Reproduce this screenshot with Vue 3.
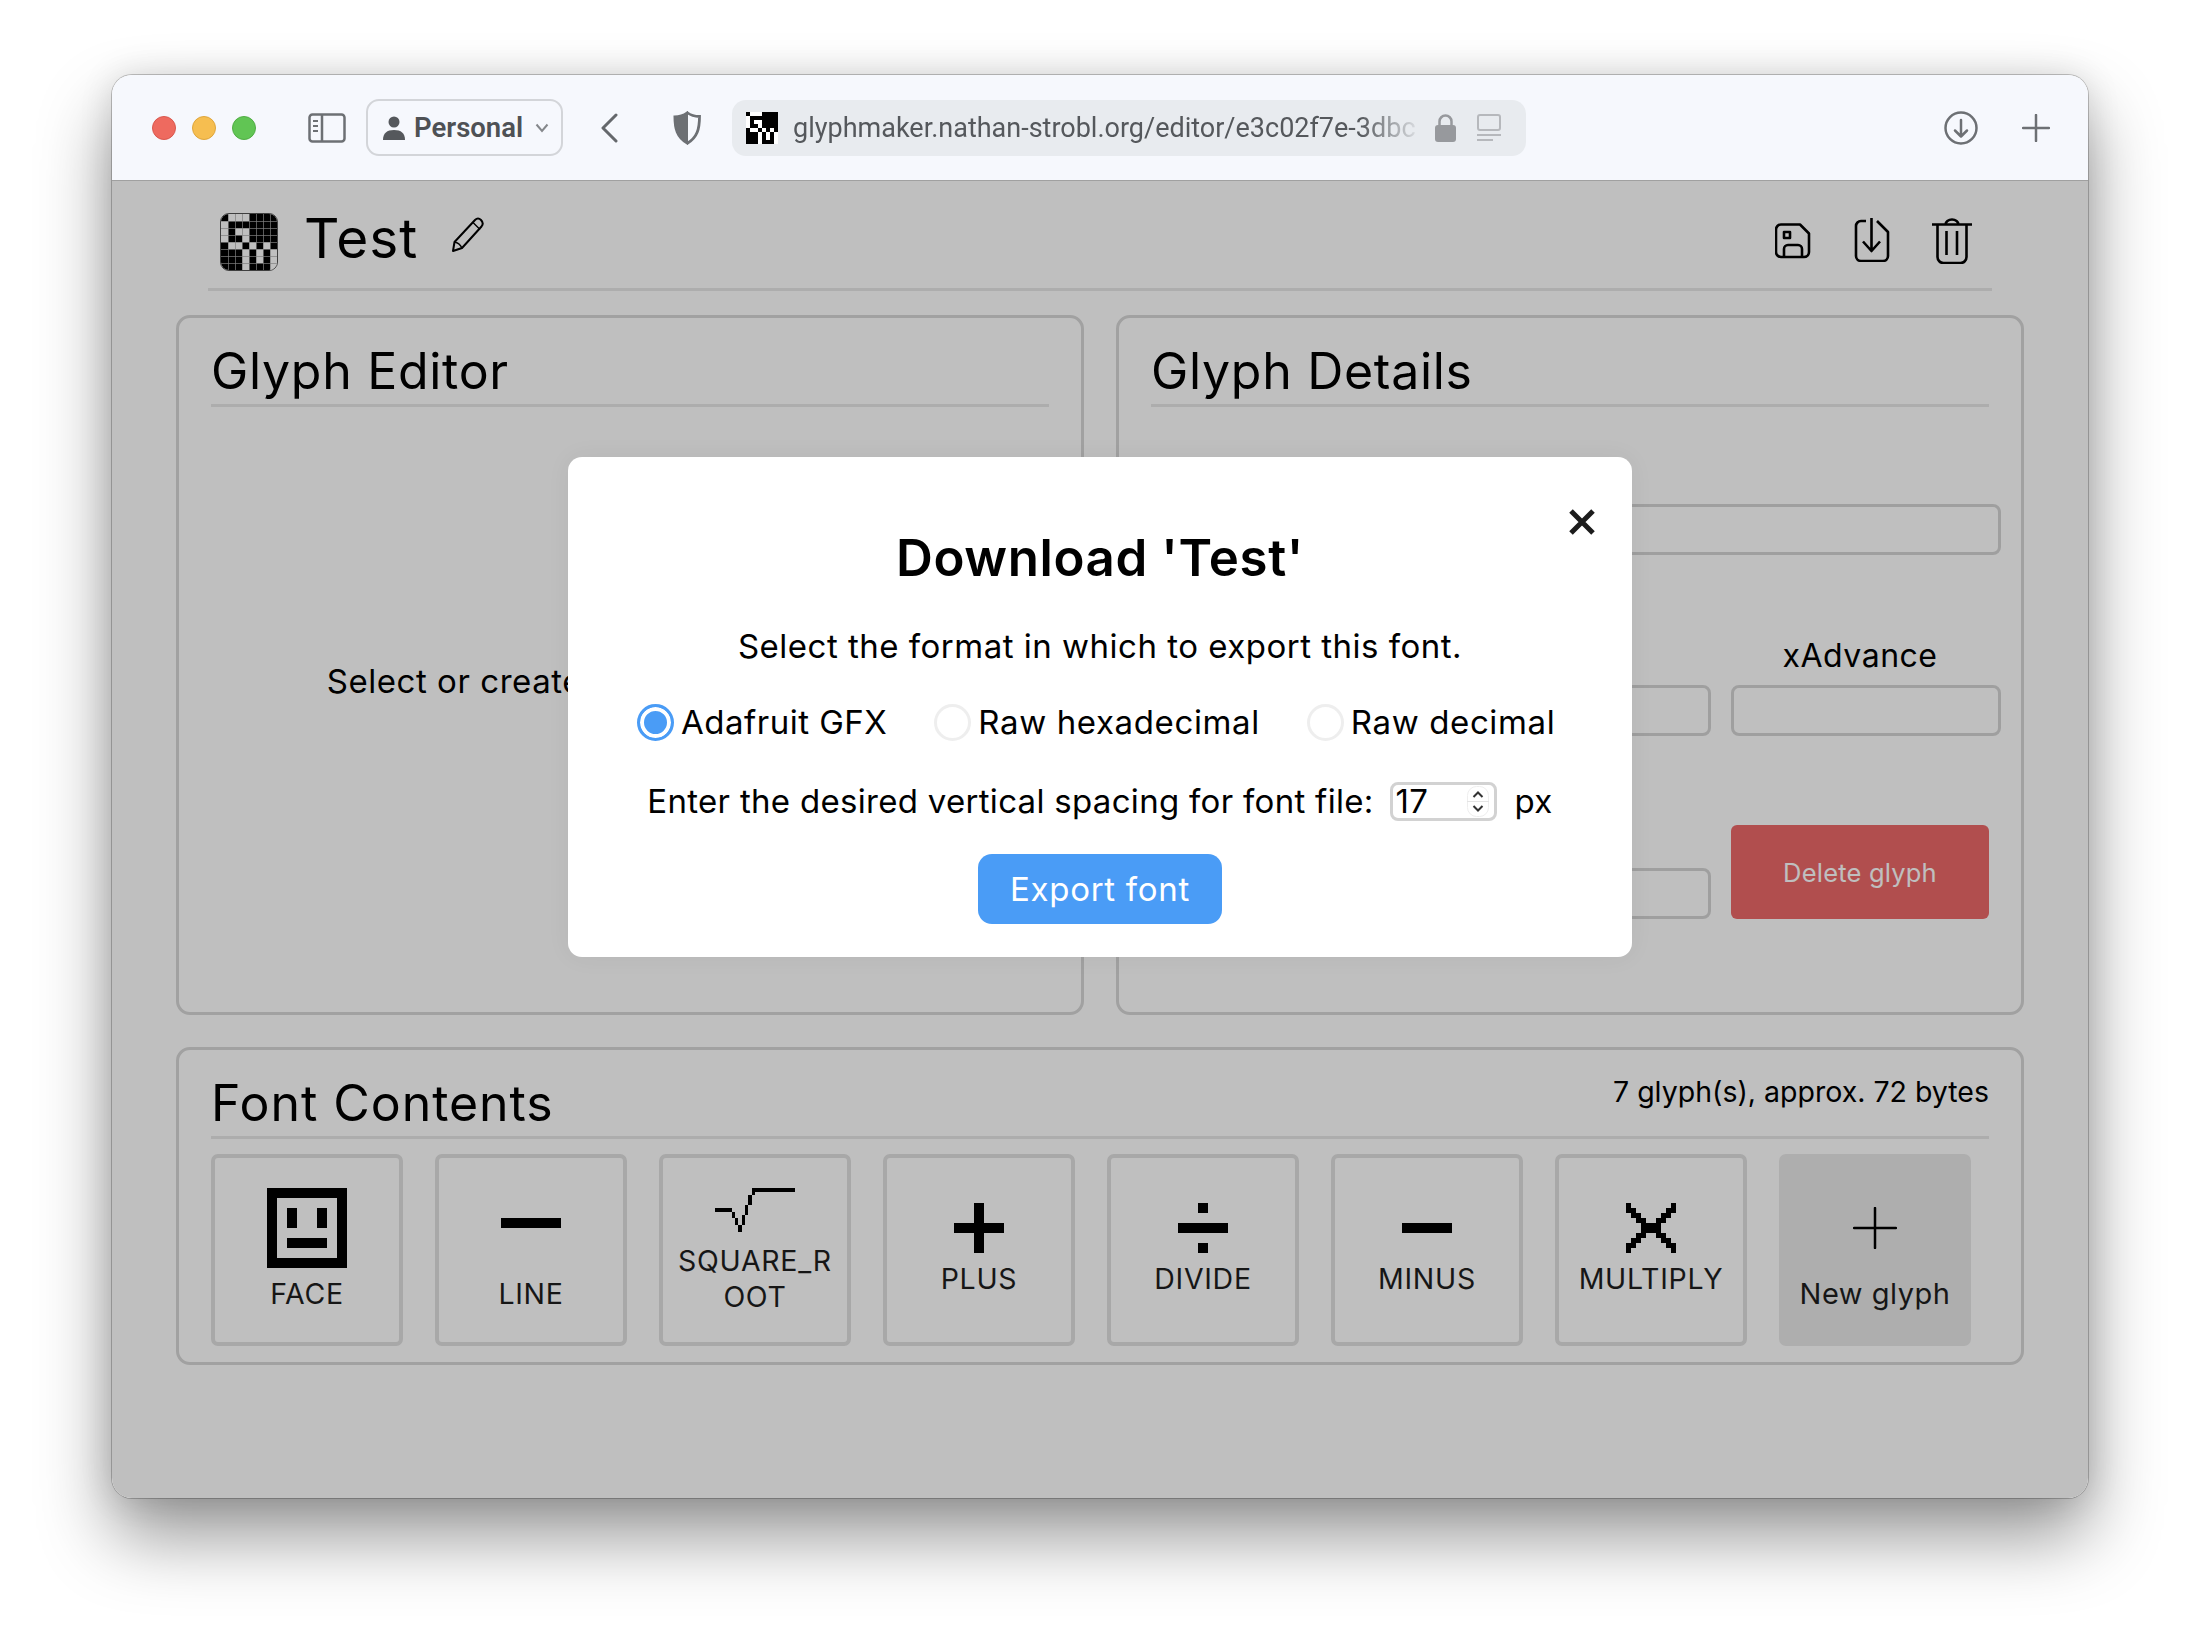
<script setup>
const logoRows = ['#...####', '.#######', '.#..####', '.##.####', '#..#.#.#', '###.#.#.', '###.#.#.', '###.###.']
function cells(rows) {
  const out = []
  rows.forEach((row, y) => {
    for (let x = 0; x < row.length; x++) {
      if (row[x] === '#') out.push({ x, y })
    }
  })
  return out
}
const logoCells = cells(logoRows)
const gridLines = [1, 2, 3, 4, 5, 6, 7]
const glyphs = [
  { name: 'FACE', px: 10, rows: ['########', '#......#', '#.#..#.#', '#.#..#.#', '#......#', '#.####.#', '#......#', '########'] },
  { name: 'LINE', px: 10, rows: ['......', '......', '......', '######', '......', '......', '......', '......'] },
  {
    name: 'SQUARE_ROOT',
    px: 10 / 3,
    rows: [
      '........................',
      '...........#############',
      '...........#............',
      '..........#.............',
      '..........#.............',
      '..........#.............',
      '.........#..............',
      '#####....#..............',
      '.....#...#..............',
      '.....#..#...............',
      '......#.#...............',
      '......#.#...............',
      '.......#................',
      '.......#................',
      '........................'
    ]
  },
  { name: 'PLUS', px: 10, rows: ['..#..', '..#..', '#####', '..#..', '..#..'] },
  { name: 'DIVIDE', px: 10, rows: ['..#..', '.....', '#####', '.....', '..#..'] },
  { name: 'MINUS', px: 10, rows: ['.....', '.....', '#####', '.....', '.....'] },
  {
    name: 'MULTIPLY',
    px: 5,
    rows: ['#........#', '##......##', '.##....##.', '..##..##..', '...####...', '...####...', '..##..##..', '.##....##.', '##......##', '#........#']
  }
].map((g) => ({ ...g, w: g.rows[0].length * g.px, h: g.rows.length * g.px, cells: cells(g.rows) }))
const formats = [
  { label: 'Adafruit GFX', checked: true },
  { label: 'Raw hexadecimal', checked: false },
  { label: 'Raw decimal', checked: false }
]
</script>

<template>
  <div class="page">
    <div class="window">
      <header class="toolbar">
        <div class="lights"><i class="red"></i><i class="yellow"></i><i class="green"></i></div>
        <svg class="sidebar-ic" width="38" height="30" viewBox="0 0 38 30" fill="none" stroke="#6d7074" stroke-width="2.5">
          <rect x="1.5" y="1.5" width="35" height="27" rx="3" />
          <path d="M14 1.5v27" />
          <path d="M5 8h5M5 13h5M5 18h5" stroke-width="2" />
        </svg>
        <div class="profile">
          <svg width="22" height="26" viewBox="0 0 22 26" fill="#55585c"><circle cx="11" cy="7" r="5.5" /><path d="M0 25c0-7 4-10 11-10s11 3 11 10z" /></svg>
          <span>Personal</span>
          <svg width="14" height="10" viewBox="0 0 14 10" fill="none" stroke="#85888c" stroke-width="2"><path d="M1.5 1.5 7 8l5.500-6.500" /></svg>
        </div>
        <svg class="back" width="18" height="30" viewBox="0 0 18 30" fill="none" stroke="#65686c" stroke-width="3" stroke-linecap="round" stroke-linejoin="round"><path d="M16 2 3 15l13 13" /></svg>
        <svg class="shield" width="28" height="34" viewBox="0 0 28 34" fill="none"><path d="M14 1.500C10 4.500 6 5.500 1.500 5.500c0 12 2 21 12.500 27z" fill="#6d7074" stroke="#6d7074" stroke-width="2" /><path d="M14 1.500c4 3 8 4 12.500 4 0 12-2 21-12.500 27" stroke="#6d7074" stroke-width="2.800" /></svg>
        <div class="urlbar">
          <svg class="favicon" width="32" height="32" viewBox="0 0 8 8" shape-rendering="crispEdges">
            <rect width="8" height="8" fill="#fff" />
            <rect v-for="c in logoCells" :key="c.x + '-' + c.y" :x="c.x" :y="c.y" width="1" height="1" fill="#000" />
          </svg>
          <span class="url">glyphmaker.nathan-strobl.org/editor/e3c02f7e-3dbc</span>
          <svg class="lock" width="21" height="28" viewBox="0 0 21 28" fill="none"><path d="M4.500 12V7.500a6 6 0 0 1 12 0V12" stroke="#97999d" stroke-width="2.500" /><rect y="11" width="21" height="17" rx="3" fill="#97999d" /></svg>
          <svg class="reader" width="24" height="28" viewBox="0 0 24 28" fill="none" stroke="#b6b8bc" stroke-width="2"><rect x="1" y="1" width="22" height="15" rx="2" /><path d="M0 21h24M0 26h16" /></svg>
        </div>
        <svg class="dl" width="34" height="34" viewBox="0 0 34 34" fill="none" stroke="#6d7074" stroke-width="2.500" stroke-linecap="round" stroke-linejoin="round"><circle cx="17" cy="17" r="15.500" /><path d="M17 9v16M11 19.500l6 6 6-6" /></svg>
        <svg class="add" width="28" height="28" viewBox="0 0 28 28" fill="none" stroke="#6d7074" stroke-width="2.500" stroke-linecap="round"><path d="M14 1v26M1 14h26" /></svg>
      </header>

      <main class="main">
        <div class="app-head">
          <svg class="logo" width="58" height="58" viewBox="0 0 8 8" shape-rendering="crispEdges">
            <rect width="8" height="8" fill="#fff" />
            <rect v-for="c in logoCells" :key="c.x + '-' + c.y" :x="c.x" :y="c.y" width="1" height="1" fill="#000" />
            <g stroke="#aaa" stroke-width="0.1">
              <path v-for="n in gridLines" :key="n" :d="`M${n} 0v8M0 ${n}h8`" />
            </g>
          </svg>
          <h1>Test</h1>
          <svg class="pencil" width="34" height="36" viewBox="0 0 34 36" fill="none" stroke="#000" stroke-width="2" stroke-linejoin="round"><path d="M2 34l1.500-9L24 3c2-2 4-2 6 0s2.500 4 .5 6.500L11 31z" /><path d="M3.500 25c3 .5 6 3 7.500 6M22 5.500l7 7" stroke-width="1.400" /></svg>
          <div class="actions">
            <svg width="36" height="36" viewBox="0 0 36 36" fill="none" stroke="#000" stroke-width="2.600" stroke-linejoin="round"><path d="M6 1.500h19l9 9V29a5 5 0 0 1-5 5H6a5 5 0 0 1-5-5V6.500a5 5 0 0 1 5-5z" /><rect x="9" y="9" width="6" height="6" /><path d="M9 34V26a4 4 0 0 1 4-4h10a4 4 0 0 1 4 4v8" /></svg>
            <svg class="a-dl" width="36" height="44" viewBox="0 0 36 44" fill="none" stroke="#000" stroke-width="2.600" stroke-linejoin="round"><path d="M12 3H7a5 5 0 0 0-5 5v30a5 5 0 0 0 5 5h22a5 5 0 0 0 5-5V14L23 3" /><path d="M17.500 0v33M9 23.500l8.500 9.500 8.500-9.500" /></svg>
            <svg class="a-tr" width="40" height="46" viewBox="0 0 40 46" fill="none" stroke="#000" stroke-width="2.600" stroke-linejoin="round"><path d="M0 6.500h40M13.500 6.500a6.500 5 0 0 1 13 0M5.500 6.500V39a6 6 0 0 0 6 6h17a6 6 0 0 0 6-6V6.500M14.500 13v24M25 13v24" /></svg>
          </div>
        </div>

        <div class="panels">
          <section class="panel tall">
            <h2 class="panel-head">Glyph Editor</h2>
            <div class="empty">Select or create a glyph to edit it here</div>
          </section>
          <section class="panel tall">
            <h2 class="panel-head">Glyph Details</h2>
            <div class="details">
              <div class="field wide"></div>
              <div class="field-row labels">
                <span class="field-label"></span>
                <span class="field-label">xAdvance</span>
              </div>
              <div class="field-row">
                <div class="field"></div>
                <div class="field"></div>
              </div>
              <div class="field-row end">
                <div class="field"></div>
                <button class="delete">Delete glyph</button>
              </div>
            </div>
          </section>
        </div>

        <section class="panel contents">
          <div class="panel-head split">
            <h2>Font Contents</h2>
            <span class="stats">7 glyph(s), approx. 72 bytes</span>
          </div>
          <div class="tiles">
            <button v-for="g in glyphs" :key="g.name" class="tile">
              <svg :width="g.w" :height="g.h" :viewBox="`0 0 ${g.w} ${g.h}`" shape-rendering="crispEdges">
                <rect v-for="c in g.cells" :key="c.x + '-' + c.y" :x="c.x * g.px" :y="c.y * g.px" :width="g.px" :height="g.px" fill="#000" />
              </svg>
              <span class="tile-label">{{ g.name }}</span>
            </button>
            <button class="tile new">
              <span class="new-ic">
                <svg width="44" height="42" viewBox="0 0 44 42" fill="none" stroke="#000" stroke-width="2.500" stroke-linecap="round"><path d="M22 1v40M1 21h42" /></svg>
              </span>
              <span class="tile-label">New glyph</span>
            </button>
          </div>
        </section>

        <div class="scrim">
          <div class="modal">
            <svg class="close" width="26" height="26" viewBox="0 0 26 26" fill="none" stroke="#1c1c1c" stroke-width="5"><path d="M2 2l22 22M24 2 2 24" /></svg>
            <h3>Download 'Test'</h3>
            <p class="lead">Select the format in which to export this font.</p>
            <div class="formats">
              <label v-for="f in formats" :key="f.label" class="format">
                <i class="radio" :class="{ on: f.checked }"></i>
                <span>{{ f.label }}</span>
              </label>
            </div>
            <div class="spacing">
              <span>Enter the desired vertical spacing for font file:</span>
              <div class="num">
                <span>17</span>
                <svg width="22" height="31" viewBox="0 0 22 31" fill="none">
                  <rect x="0.500" y="0.500" width="21" height="30" rx="9" fill="#fff" stroke="#eee" />
                  <path d="M0 15.500h22" stroke="#e4e4e4" />
                  <path d="M6.500 11 11 6.500l4.500 4.500M6.500 20l4.500 4.500 4.500-4.500" stroke="#333" stroke-width="2" />
                </svg>
              </div>
              <span class="unit">px</span>
            </div>
            <button class="export">Export font</button>
          </div>
        </div>
      </main>
    </div>
  </div>
</template>

<style>
html, body { margin: 0; background: #fff; }
</style>

<style scoped>
.page {
  width: 2200px;
  height: 1646px;
  box-sizing: border-box;
  padding: 75px 112px 0;
  overflow: hidden;
  background: #fff;
  font-family: "Inter", "Liberation Sans", sans-serif;
  color: #000;
}
.window {
  width: 1976px;
  height: 1423px;
  border-radius: 20px;
  display: flex;
  flex-direction: column;
  overflow: hidden;
  box-shadow: 0 0 0 1px rgba(0, 0, 0, .22), 0 38px 72px rgba(0, 0, 0, .42), 0 0 34px rgba(0, 0, 0, .12);
}
.toolbar {
  height: 105px;
  flex: none;
  box-sizing: content-box;
  display: flex;
  align-items: center;
  background: #f6f8fd;
  border-bottom: 1px solid #a0a0a0;
}
.lights { display: flex; gap: 16px; margin-left: 40px; }
.lights i { width: 24px; height: 24px; border-radius: 50%; box-sizing: border-box; }
.red { background: #ee6a5f; border: 1px solid #d9584e; }
.yellow { background: #f6be50; border: 1px solid #dfa63c; }
.green { background: #61c554; border: 1px solid #51ad45; }
.sidebar-ic { margin-left: 52px; }
.profile {
  width: 197px;
  height: 57px;
  margin-left: 20px;
  box-sizing: border-box;
  border: 2px solid #d3d5d9;
  border-radius: 13px;
  display: flex;
  align-items: center;
  padding-left: 15px;
  color: #4e5155;
  font-size: 27.500px;
  font-weight: 600;
  font-family: "Roboto", "Inter", sans-serif;
}
.profile span { margin-left: 9px; }
.profile svg:last-child { margin-left: 12px; }
.back { margin-left: 37px; }
.shield { margin-left: 55px; }
.urlbar {
  width: 794px;
  height: 56px;
  margin-left: 31px;
  border-radius: 14px;
  background: #e8ebef;
  display: flex;
  align-items: center;
  padding-left: 14px;
  box-sizing: border-box;
}
.url {
  width: 630px;
  margin: 1px 0 0 15px;
  flex: none;
  overflow: hidden;
  white-space: nowrap;
  font-family: "Roboto", "Inter", sans-serif;
  font-size: 27px;
  color: #55585c;
  -webkit-mask-image: linear-gradient(90deg, #000 90%, transparent 100%);
  mask-image: linear-gradient(90deg, #000 90%, transparent 100%);
}
.lock { margin-left: 12px; flex: none; }
.reader { margin-left: 21px; flex: none; }
.dl { margin-left: auto; }
.add { margin-left: 44px; margin-right: 38px; }
.main {
  position: relative;
  flex: 1;
  background: #fff;
}
.app-head {
  height: 107px;
  margin: 0 96px;
  padding: 0 20px 0 12px;
  display: flex;
  align-items: center;
  border-bottom: 3px solid #e7e7e7;
}
.logo { border-radius: 9px; margin-top: 15px; flex: none; border: 1px solid #555; box-sizing: border-box; }
h1 { margin: 8px 0 0 26px; font-size: 55px; font-weight: 400; line-height: 1; letter-spacing: 1px; }
.pencil { margin: 0 0 0 33px; }
.actions { margin-left: auto; display: flex; align-items: flex-start; gap: 46px; margin-top: 18px; }
.a-dl { margin-top: -5px; margin-left: -3px; }
.a-tr { margin-top: -5px; margin-left: -4px; }
.panels {
  display: flex;
  gap: 32px;
  margin: 24px 64px 0;
}
.panel {
  box-sizing: border-box;
  border: 3px solid #d7d7d7;
  border-radius: 14px;
  padding: 0 32px;
}
.tall { width: 908px; height: 700px; display: flex; flex-direction: column; }
.panel-head {
  height: 86px;
  box-sizing: content-box;
  margin: 0;
  border-bottom: 3px solid #e7e7e7;
  font-size: 50px;
  font-weight: 400;
  letter-spacing: .7px;
  line-height: 106px;
  flex: none;
}
.empty {
  flex: 1;
  display: flex;
  align-items: center;
  justify-content: center;
  padding-bottom: 58px;
  font-size: 33px;
  letter-spacing: .55px;
  white-space: nowrap;
}
.details { position: relative; width: 850px; }
.field {
  box-sizing: border-box;
  height: 51px;
  border: 3px solid #d5d5d5;
  border-radius: 8px;
}
.field.wide { margin-top: 97px; }
.field-row {
  display: grid;
  grid-template-columns: 560px 270px;
  gap: 20px;
}
.labels { margin-top: 79px; height: 51px; align-items: center; }
.field-label { font-size: 32px; letter-spacing: .5px; text-align: center; padding: 0 12px 8px 0; }
.end { align-items: end; margin-top: 89px; }
.delete {
  width: 258px;
  height: 94px;
  border: 0;
  border-radius: 6px;
  background: #ed6968;
  color: #fff;
  font: 400 25.500px "Inter", sans-serif;
  letter-spacing: .2px;
}
.contents { margin: 32px 64px 0; height: 318px; }
.split { display: flex; justify-content: space-between; align-items: flex-start; }
.split h2 { margin: 0; font: inherit; letter-spacing: .95px; line-height: 107px; }
.stats { font-size: 28.500px; letter-spacing: 0; line-height: 36px; margin-top: 24px; }
.tiles { display: flex; gap: 32px; margin-top: 15px; }
.tile {
  width: 192px;
  height: 192px;
  flex: none;
  box-sizing: border-box;
  padding: 0 10px;
  border: 4px solid #e0e0e0;
  border-radius: 7px;
  background: none;
  display: flex;
  flex-direction: column;
  align-items: center;
  justify-content: center;
  color: #000;
  font-family: inherit;
}
.tile svg { display: block; flex: none; }
.tile-label {
  display: block;
  width: 100%;
  margin-top: 8px;
  font-size: 28.500px;
  letter-spacing: .7px;
  line-height: 36px;
  text-align: center;
  word-break: break-all;
  color: #1e1e1e;
}
.tile.new { background: #e9e9e9; border-color: #e9e9e9; }
.tile.new .tile-label { font-size: 29px; letter-spacing: .5px; }
.new-ic { height: 80px; display: flex; align-items: center; }
.scrim {
  position: absolute;
  inset: 0;
  background: rgba(0, 0, 0, .25);
}
.modal {
  position: absolute;
  left: 456px;
  top: 276px;
  width: 1064px;
  height: 500px;
  box-sizing: border-box;
  border-radius: 14px;
  background: #fff;
  box-shadow: 0 0 24px rgba(0, 0, 0, .05);
  display: flex;
  flex-direction: column;
  align-items: center;
}
.close { position: absolute; right: 37px; top: 52px; }
h3 { margin: 70px 0 0; font-size: 51px; font-weight: 600; letter-spacing: .6px; line-height: 62px; }
.lead { margin: 36px 0 0; font-size: 33px; letter-spacing: .5px; line-height: 42px; }
.formats { display: flex; align-self: flex-start; margin: 34px 0 0 69px; gap: 47px; height: 42px; align-items: center; }
.format { display: flex; align-items: center; gap: 7px; font-size: 33px; letter-spacing: .62px; }
.format:first-child { letter-spacing: .5px; }
.radio {
  width: 37px;
  height: 37px;
  box-sizing: border-box;
  border-radius: 50%;
  border: 3px solid #eee;
  flex: none;
}
.radio.on {
  border-color: #4a9cf6;
  background: #4a9cf6;
  box-shadow: inset 0 0 0 4px #fff;
}
.spacing {
  display: flex;
  align-items: center;
  margin-top: 37px;
  height: 42px;
  font-size: 33px;
  letter-spacing: .3px;
  white-space: nowrap;
}
.num {
  width: 107px;
  height: 39px;
  margin-left: 16px;
  box-sizing: border-box;
  border: 3px solid #d2d2d2;
  border-radius: 8px;
  display: flex;
  align-items: center;
  justify-content: space-between;
  padding: 0 5px 0 3px;
}
.unit { margin-left: 18px; }
.export {
  margin-top: 32px;
  width: 244px;
  height: 70px;
  border: 0;
  border-radius: 14px;
  background: #4a9cf6;
  color: #fff;
  font: 400 33px "Inter", sans-serif;
  letter-spacing: .7px;
}
</style>
